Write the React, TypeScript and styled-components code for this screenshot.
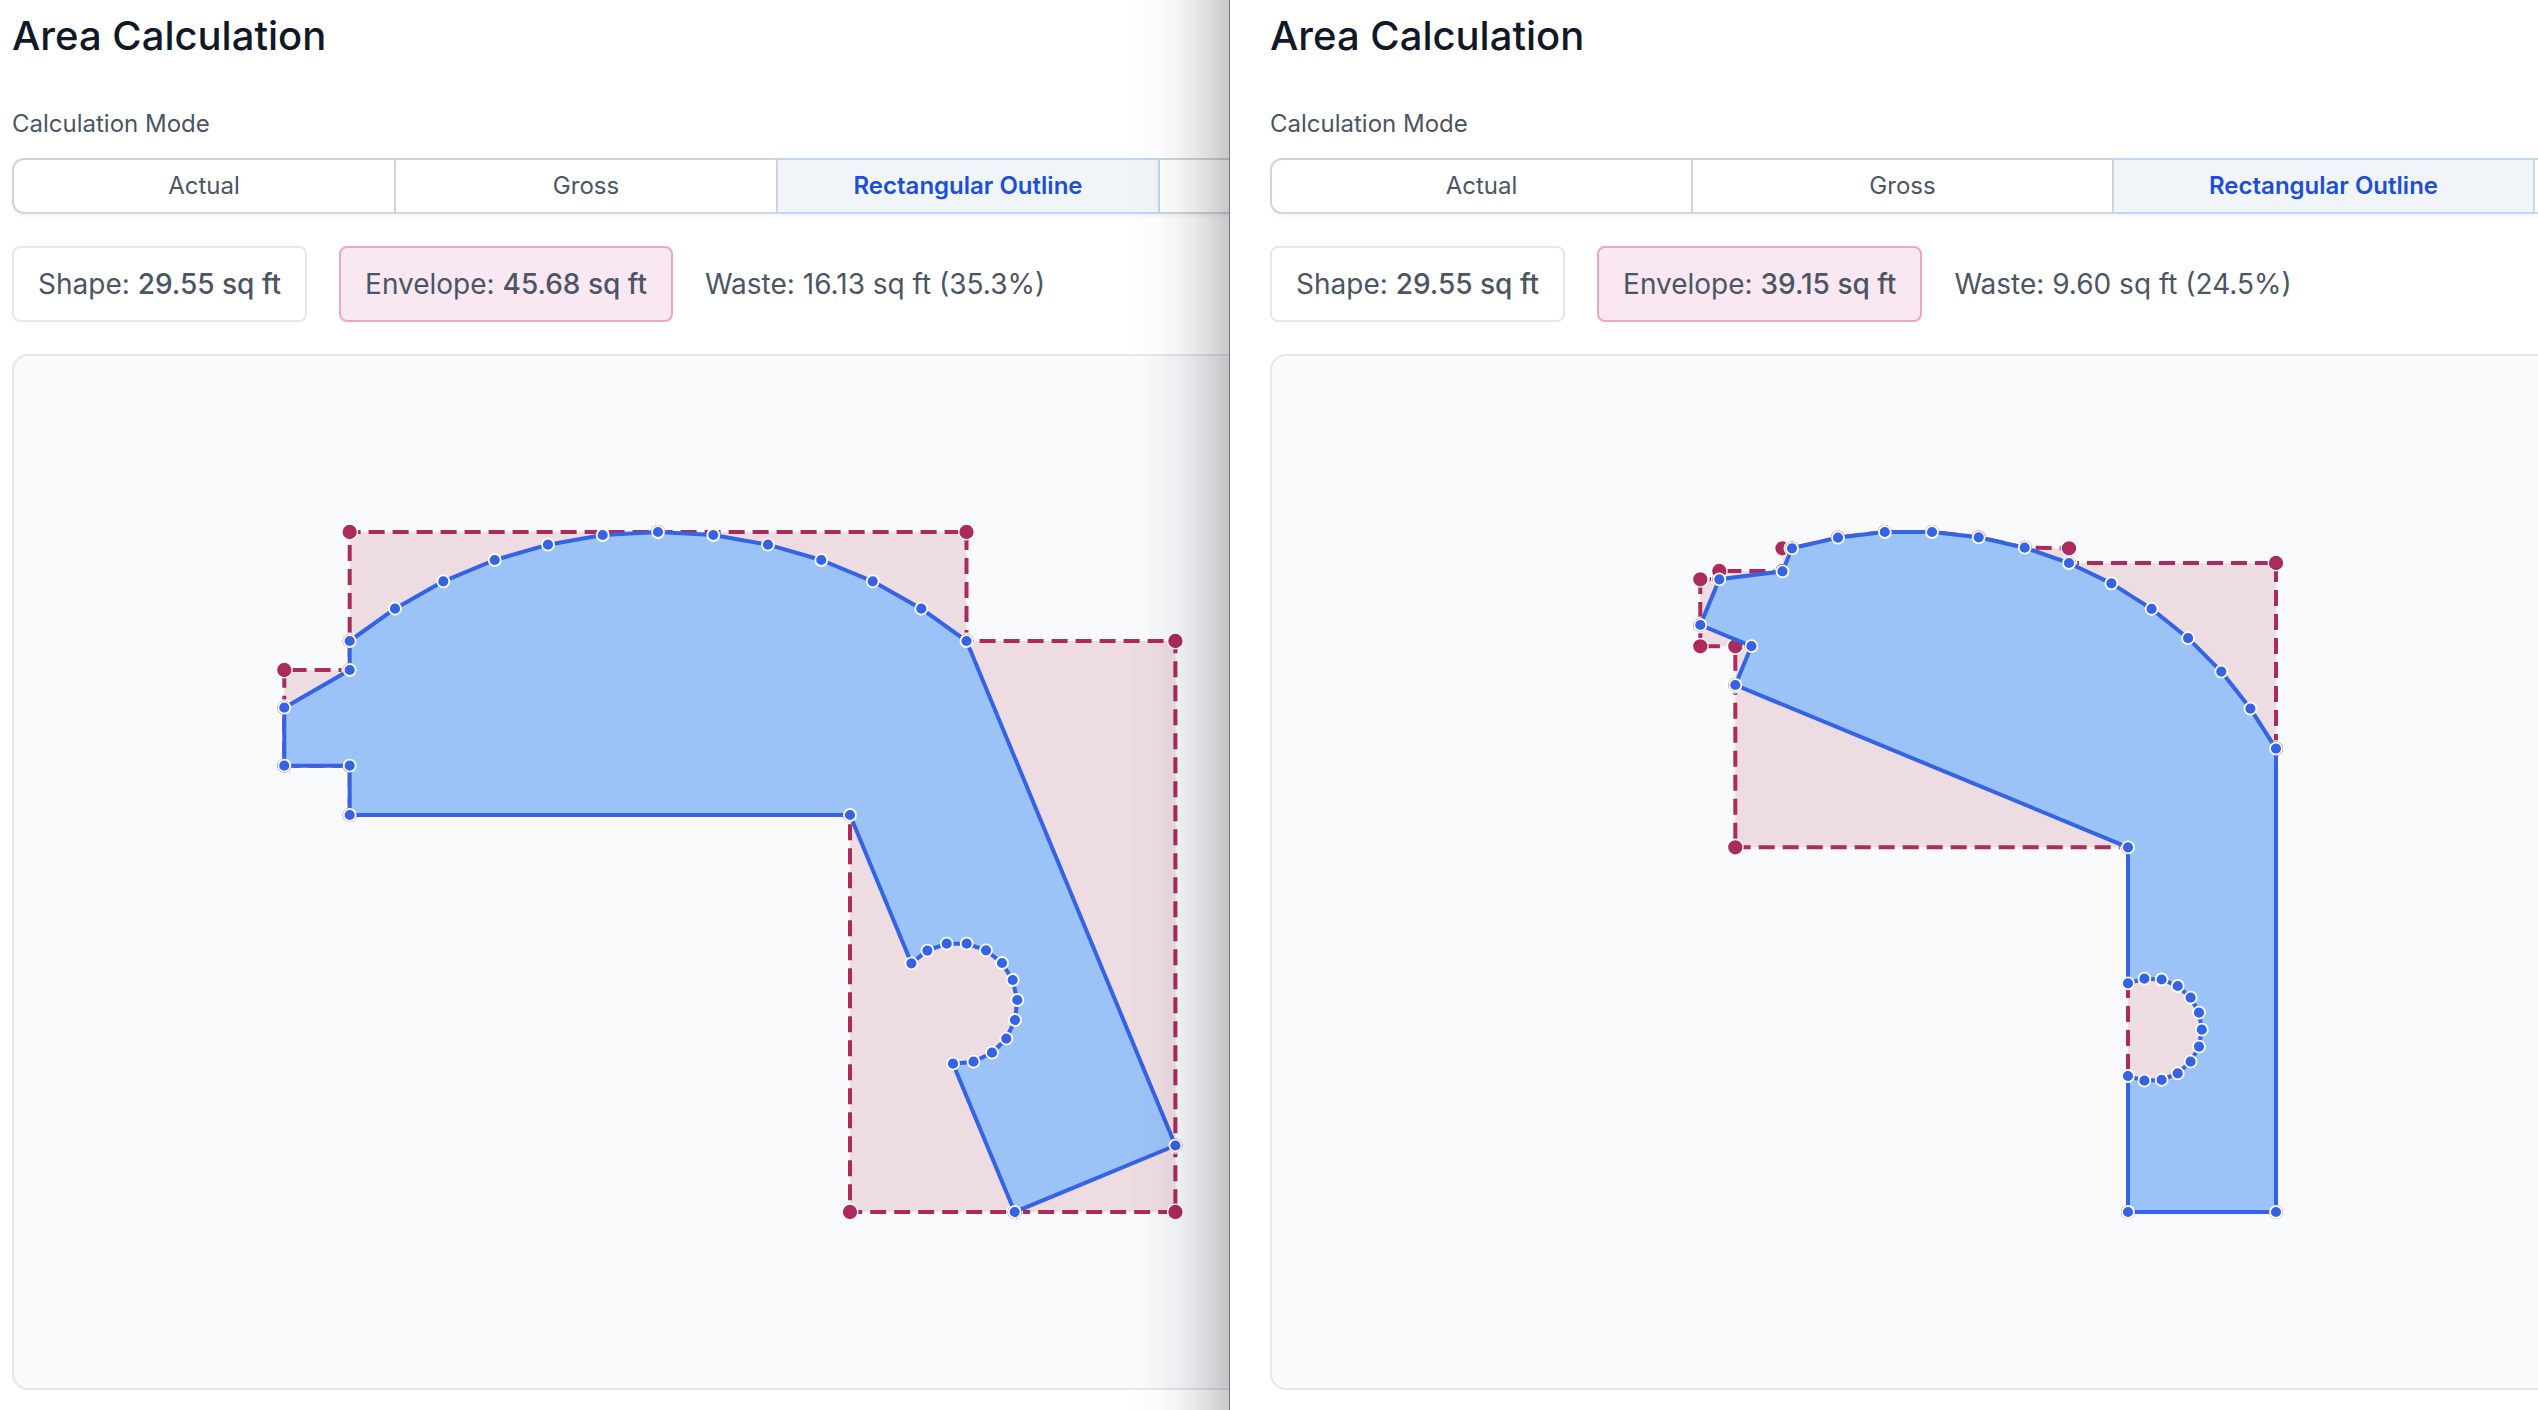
import React from "react";
import styled, { createGlobalStyle, css } from "styled-components";

const GlobalStyle = createGlobalStyle`
  *, *::before, *::after { box-sizing: border-box; }
  body {
    margin: 0;
    background: #ffffff;
    color: #4b5563;
    font-family: Inter, "Liberation Sans", sans-serif;
  }
`;

const Workspace = styled.main`
  display: grid;
  grid-template-columns: 1230fr 1308fr;
  min-height: 100vh;
  overflow: hidden;
`;

const Pane = styled.section<{ $gutter: number; $front?: boolean }>`
  min-width: 0;
  padding: 12px 0 20px ${(p) => p.$gutter}px;
  background: #ffffff;
  ${(p) =>
    p.$front
      ? css`
          position: relative;
          box-shadow: -1px 0 0 #98999b;
          &::before {
            content: "";
            position: absolute;
            inset: -200px 0;
            z-index: -1;
            box-shadow: 0 0 80px rgba(20, 24, 30, 0.48);
          }
          z-index: 1;
        `
      : css`
          overflow: hidden;
        `}
`;

/* The sheet is wider than its window, the rest runs out of sight. */
const Sheet = styled.div<{ $bleed: number }>`
  display: flex;
  flex-direction: column;
  margin-right: -${(p) => p.$bleed}px;
`;

const Title = styled.h1`
  margin: 0 0 44px;
  color: #111827;
  font-size: 40px;
  font-weight: 500;
  line-height: 48px;
`;

const ModeField = styled.fieldset`
  min-width: 0;
  margin: 0 0 32px;
  padding: 0;
  border: 0;
`;

const ModeLegend = styled.legend`
  margin-bottom: 14px;
  padding: 0;
  font-size: 24px;
  line-height: 40px;
`;

const Segments = styled.div`
  display: flex;
  border-radius: 12px;
  box-shadow: 0 3px 3px rgba(15, 40, 80, 0.04);
`;

const Segment = styled.label`
  display: flex;
  flex: 1 1 0;
  align-items: center;
  justify-content: center;
  height: 56px;
  border: 2px solid #d1d5db;
  border-left-width: 0;
  background: #ffffff;
  font-size: 24px;
  line-height: 36px;
  cursor: pointer;

  &:first-child {
    border-left-width: 2px;
    border-radius: 12px 0 0 12px;
  }
  &:last-child {
    border-radius: 0 12px 12px 0;
  }
  &:has(input:checked) {
    border-color: #bfd7fa;
    background: #f1f5fa;
    color: #1d4ed8;
    font-weight: 600;
  }
`;

const HiddenRadio = styled.input`
  width: 0;
  height: 0;
  margin: 0;
  appearance: none;
`;

const Stats = styled.div`
  display: flex;
  align-items: center;
  gap: 32px;
  margin-bottom: 32px;
  font-size: 28px;
  line-height: 40px;
  white-space: nowrap;
`;

const Stat = styled.p<{ $tone?: "plain" | "pink" }>`
  margin: 0;
  ${(p) =>
    p.$tone &&
    css`
      padding: 16px 24px;
      border: 2px solid ${p.$tone === "pink" ? "#eaa6cb" : "#e5e7eb"};
      border-radius: 8px;
      background: ${p.$tone === "pink" ? "#f9e7f2" : "#ffffff"};
    `}
`;

const Value = styled.strong`
  font-weight: 500;
`;

const Canvas = styled.div`
  border: 2px solid #e5e7eb;
  border-radius: 16px;
  background: #f9fafc;
  overflow: hidden;
`;

const Drawing = styled.svg`
  display: block;
  width: 100%;
  height: 1032px;
`;

type Point = [number, number];

interface Plan {
  name: string;
  viewBox: string;
  shape: Point[];
  envelope: Point[];
  dashOffset: number;
}

const leftPlan: Plan = {
  name: "left",
  viewBox: "14 356 1526 1032",
  shape: [
    [284.3, 707.7], [349.7, 670], [349.7, 641], [395, 608.7], [443.3, 581.3],
    [494.7, 560], [548, 544.7], [602.7, 535], [658, 532], [713.3, 535],
    [768, 544.7], [821.3, 560], [872.7, 581.3], [921.3, 608.7], [966.5, 641],
    [1175.4, 1145.5], [1014.7, 1212], [953, 1063.7], [973.5, 1061.7],
    [992, 1052.7], [1006.3, 1038.7], [1015, 1020], [1017.3, 1000],
    [1012.7, 980], [1002, 963], [986, 950.3], [966.7, 943.7], [946.7, 943.7],
    [927.4, 950.6], [911.4, 963.3], [850, 815], [349.7, 815],
    [349.7, 765.7], [284.3, 765.7],
  ],
  envelope: [
    [284.3, 707.7], [284.3, 670], [349.7, 670], [349.7, 641], [349.7, 532],
    [658, 532], [966.5, 532], [966.5, 641], [1175.4, 641], [1175.4, 1145.5],
    [1175.4, 1212], [1014.7, 1212], [850, 1212], [850, 815], [349.7, 815],
    [349.7, 765.7], [284.3, 765.7],
  ],
  dashOffset: 4,
};

const rightArc: Point[] = [
  [1792, 548.3], [1838, 537.6], [1884.8, 532], [1932, 532], [1978.7, 537.3],
  [2024.7, 547.7],
];

const rightPlan: Plan = {
  name: "right",
  viewBox: "1272 356 1682 1032",
  shape: [
    ...rightArc,
    [2069, 563], [2111.4, 583.4], [2151.6, 608.9], [2188.1, 638.2],
    [2221.3, 671.6], [2250.4, 708.6], [2276, 748.6], [2276, 1212],
    [2128, 1212], [2128, 1076], [2144.4, 1080.7], [2161.6, 1079.9],
    [2177.7, 1073.3], [2190.6, 1061.7], [2199, 1046.6], [2201.8, 1029.7],
    [2199, 1012.7], [2190.6, 997.7], [2177.7, 986], [2161.6, 979.5],
    [2144.4, 978.7], [2128, 983.3], [2128, 847.3], [1735.3, 685],
    [1751.4, 646.2], [1700.3, 625], [1719.3, 579.3], [1782.5, 571.3],
  ],
  envelope: [
    [2069, 563], [2276, 563], [2276, 748.6], [2276, 1212],
    [2128, 1212], [2128, 847.3], [1735.3, 847.3], [1735.3, 685],
    [1735.3, 646.3], [1751.4, 646.3], [1735.3, 646.3], [1700.3, 646.3],
    [1700.3, 625], [1700.3, 579.3], [1719.3, 579.3], [1719.3, 571],
    [1782.5, 571], [1782.5, 548.3],
    ...rightArc,
    [2069, 548.3],
  ],
  dashOffset: 6,
};

const toPoints = (points: Point[]) => points.map((p) => p.join(",")).join(" ");

function PlanDrawing({ plan }: { plan: Plan }) {
  return (
    <Canvas>
      <Drawing
        viewBox={plan.viewBox}
        preserveAspectRatio="xMinYMid meet"
        role="img"
        aria-label="Shape and its rectangular envelope"
      >
        <polygon
          points={toPoints(plan.envelope)}
          fill="#eddce2"
          stroke="#ab2b5b"
          strokeWidth={4}
          strokeDasharray="16 8"
          strokeDashoffset={plan.dashOffset}
        />
        {plan.envelope.map(([x, y], i) => (
          <circle key={i} cx={x} cy={y} r={7.8} fill="#ab2b5b" stroke="#ffffff" strokeWidth={1.3} />
        ))}
        <polygon
          points={toPoints(plan.shape)}
          fill="#9cc3f8"
          stroke="#3563e5"
          strokeWidth={4}
          strokeLinejoin="round"
        />
        {plan.shape.map(([x, y], i) => (
          <circle key={i} cx={x} cy={y} r={6} fill="#3563e5" stroke="#ffffff" strokeWidth={1.8} />
        ))}
      </Drawing>
    </Canvas>
  );
}

const modes = ["Actual", "Gross", "Rectangular Outline", ""];

interface CalculationProps {
  plan: Plan;
  gutter: number;
  bleed: number;
  front?: boolean;
  area: string;
  envelope: string;
  waste: string;
}

function Calculation({ plan, gutter, bleed, front, area, envelope, waste }: CalculationProps) {
  return (
    <Pane $gutter={gutter} $front={front}>
      <Sheet $bleed={bleed}>
        <Title>Area Calculation</Title>
        <ModeField>
          <ModeLegend>Calculation Mode</ModeLegend>
          <Segments>
            {modes.map((mode) => (
              <Segment key={mode}>
                <HiddenRadio
                  type="radio"
                  name={`mode-${plan.name}`}
                  aria-label={mode || "Other"}
                  defaultChecked={mode === "Rectangular Outline"}
                />
                {mode}
              </Segment>
            ))}
          </Segments>
        </ModeField>
        <Stats>
          <Stat $tone="plain">
            Shape: <Value>{area}</Value>
          </Stat>
          <Stat $tone="pink">
            Envelope: <Value>{envelope}</Value>
          </Stat>
          <Stat>Waste: {waste}</Stat>
        </Stats>
        <PlanDrawing plan={plan} />
      </Sheet>
    </Pane>
  );
}

export default function App() {
  return (
    <>
      <GlobalStyle />
      <Workspace>
        <Calculation
          plan={leftPlan}
          gutter={12}
          bleed={312}
          area="29.55 sq ft"
          envelope="45.68 sq ft"
          waste="16.13 sq ft (35.3%)"
        />
        <Calculation
          plan={rightPlan}
          gutter={40}
          bleed={418}
          front
          area="29.55 sq ft"
          envelope="39.15 sq ft"
          waste="9.60 sq ft (24.5%)"
        />
      </Workspace>
    </>
  );
}
